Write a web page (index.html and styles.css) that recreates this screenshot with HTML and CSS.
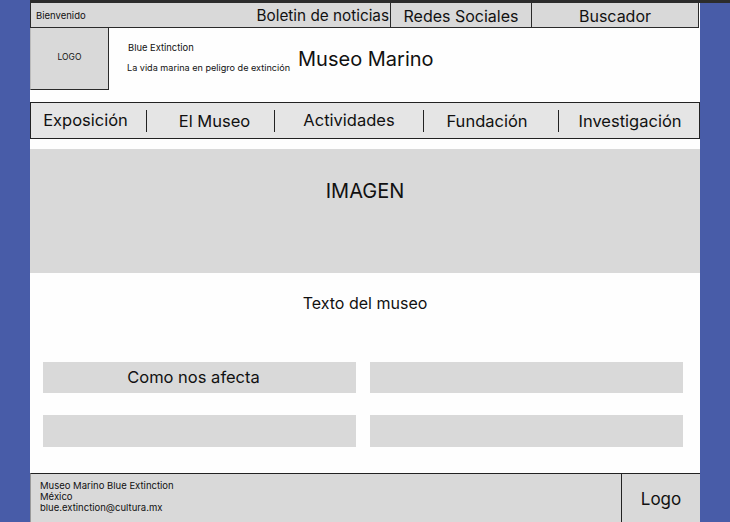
FILE: index.html
```html
<!DOCTYPE html>
<html lang="es">
<head>
<meta charset="utf-8">
<title>Museo Marino</title>
<link rel="stylesheet" href="styles.css">
</head>
<body>
<div class="frame">
  <div class="page">
    <div class="topbar">
      <div class="welcome">Bienvenido</div>
      <div class="tcell boletin">Boletin de noticias</div>
      <div class="tcell redes">Redes Sociales</div>
      <div class="tcell buscador">Buscador</div>
    </div>
    <header class="header">
      <div class="logo">LOGO</div>
      <div class="brand">
        <div class="brand-name">Blue Extinction</div>
        <div class="brand-tag">La vida marina en peligro de extinción</div>
      </div>
      <h1 class="title">Museo Marino</h1>
    </header>
    <nav class="nav">
      <div class="nitem w1">Exposición</div>
      <div class="sep"></div>
      <div class="nitem w2">El Museo</div>
      <div class="sep"></div>
      <div class="nitem w3">Actividades</div>
      <div class="sep"></div>
      <div class="nitem w4">Fundación</div>
      <div class="sep"></div>
      <div class="nitem w5">Investigación</div>
    </nav>
    <section class="hero">IMAGEN</section>
    <p class="intro">Texto del museo</p>
    <section class="cards">
      <div class="card first">Como nos afecta</div>
      <div class="card"></div>
      <div class="card tall"></div>
      <div class="card tall"></div>
    </section>
    <footer class="footer">
      <div class="finfo">
        <div>Museo Marino Blue Extinction</div>
        <div>México</div>
        <div>blue.extinction@cultura.mx</div>
      </div>
      <div class="flogo">Logo</div>
    </footer>
  </div>
</div>
</body>
</html>
```
FILE: styles.css
```css
html, body {
  margin: 0;
  padding: 0;
}
body {
  background: #485ca8;
  font-family: Inter, "Liberation Sans", sans-serif;
  color: #111;
  height: 522px;
  overflow: hidden;
}
.frame {
  margin-left: 30px;
  border-top: 3px solid #2c2c2c;
}
.page {
  width: 670px;
  background: #fefefe;
  height: 519px;
  display: flex;
  flex-direction: column;
}
.topbar {
  display: flex;
  height: 24px;
  background: #d9d9d9;
  border: 1px solid #2a2a2a;
  border-top: none;
  box-sizing: content-box;
  margin-right: 1px;
}
.welcome {
  flex: 1;
  font-size: 9.5px;
  padding: 2px 0 0 5px;
  line-height: 22px;
  box-sizing: border-box;
}
.tcell {
  font-size: 16px;
  line-height: 22px;
  padding-top: 2px;
  box-sizing: border-box;
  text-align: center;
}
.boletin {
  font-size: 15.3px;
  padding-right: 1px;
  border-right: 1px solid #2a2a2a;
}
.redes {
  width: 141px;
  border-right: 1px solid #2a2a2a;
}
.buscador {
  width: 166px;
}
.header {
  display: flex;
  align-items: flex-start;
  height: 73px;
}
.logo {
  width: 77px;
  height: 61px;
  background: #d9d9d9;
  border: 1px solid #2a2a2a;
  border-top: none;
  border-left-color: #bbb;
  font-size: 8.5px;
  display: flex;
  align-items: center;
  justify-content: center;
  padding-bottom: 3px;
  box-sizing: content-box;
  height: 58px;
}
.brand {
  margin-left: 18px;
  padding-top: 14px;
}
.brand-name {
  font-size: 9.4px;
  margin-left: 1px;
}
.brand-tag {
  font-size: 9.1px;
  margin-top: 9px;
}
.title {
  font-size: 20px;
  font-weight: 400;
  margin: 19px 0 0 8px;
}
.nav {
  display: flex;
  align-items: center;
  height: 35px;
  background: #e5e5e5;
  border: 1px solid #222;
  margin-top: 1px;
}
.nitem {
  font-size: 16.5px;
  text-align: center;
  line-height: 35px;
}
.w1 { width: 115px; padding-right: 6px; box-sizing: border-box; }
.w2 { width: 127px; padding-left: 8px; padding-top: 2px; box-sizing: border-box; }
.w3 { width: 148px; }
.w4 { width: 134px; padding-right: 8px; padding-top: 2px; box-sizing: border-box; }
.w5 { flex: 1; padding-left: 2px; padding-top: 1px; }
.sep {
  width: 1px;
  height: 22px;
  background: #222;
}
.hero {
  margin-top: 10px;
  height: 124px;
  background: #d9d9d9;
  font-size: 20px;
  text-align: center;
  padding-top: 30px;
  box-sizing: border-box;
}
.intro {
  margin: 20px 0 0;
  text-align: center;
  font-size: 16px;
  line-height: 20px;
}
.cards {
  display: grid;
  grid-template-columns: 313px 313px;
  column-gap: 14px;
  row-gap: 22px;
  margin: 49px 0 0 13px;
}
.card {
  height: 31px;
  background: #d9d9d9;
  font-size: 16.5px;
  line-height: 31px;
  text-align: center;
}
.card.first {
  padding-right: 12px;
}
.card.tall {
  height: 32px;
}
.footer {
  margin-top: 26px;
  display: flex;
  flex: 1;
  background: #d9d9d9;
  border-top: 1px solid #222;
  border-left: 1px solid #999;
}
.finfo {
  flex: 1;
  font-size: 9.5px;
  line-height: 11px;
  padding: 6px 0 0 9px;
}
.flogo {
  width: 79px;
  border-left: 1px solid #222;
  font-size: 17px;
  text-align: center;
  padding-top: 15px;
  box-sizing: border-box;
}
```
